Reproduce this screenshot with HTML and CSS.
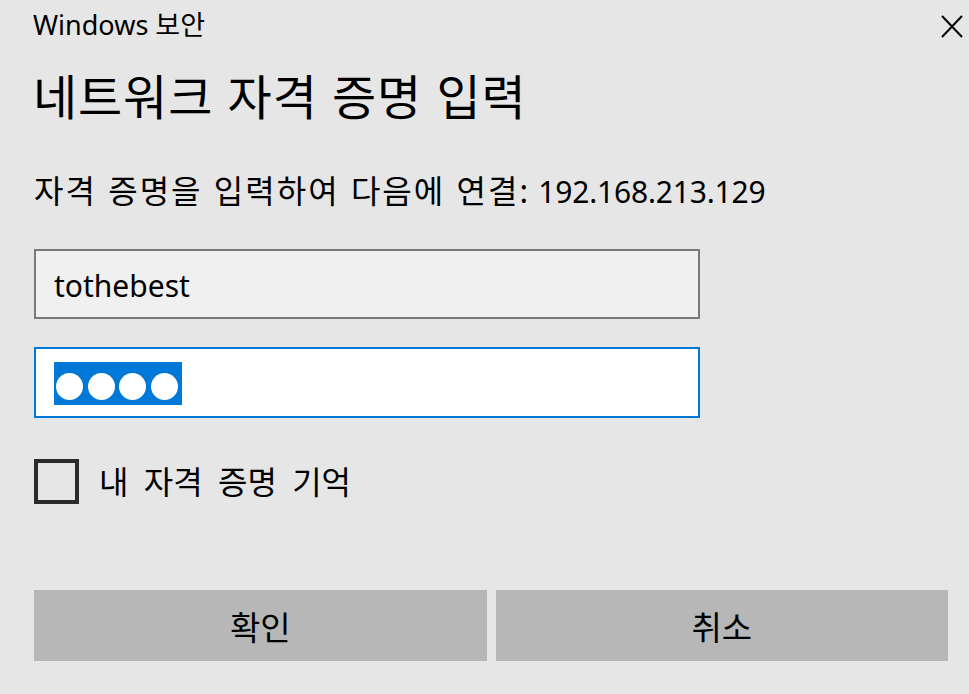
FILE: index.html
```html
<!DOCTYPE html>
<html lang="ko">
<head>
<meta charset="utf-8">
<title>Windows 보안</title>
<link rel="stylesheet" href="styles.css">
</head>
<body>
<div class="dialog">
  <div class="titlebar">
    <span class="app-name">Windows 보안</span>
    <button class="close" aria-label="닫기">
      <svg width="22" height="23" viewBox="0 0 22 23"><path d="M1 1 L21 22 M21 1 L1 22" stroke="#000" stroke-width="2" fill="none"/></svg>
    </button>
  </div>
  <h1 class="heading">네트워크 자격 증명 입력</h1>
  <p class="desc"><span class="desc-ko">자격 증명을 입력하여 다음에 연결:</span> <span class="ip">192.168.213.129</span></p>
  <div class="field field-user"><span class="value">tothebest</span></div>
  <div class="field field-pass">
    <span class="selection"><span class="dot"></span><span class="dot"></span><span class="dot"></span><span class="dot"></span></span>
  </div>
  <label class="remember"><span class="checkbox"></span><span class="remember-text">내 자격 증명 기억</span></label>
  <div class="actions">
    <button class="btn">확인</button>
    <button class="btn">취소</button>
  </div>
</div>
</body>
</html>
```
FILE: styles.css
```css
html, body {
  margin: 0;
  padding: 0;
  background: #e6e6e6;
}
body {
  width: 969px;
  height: 694px;
  overflow: hidden;
  font-family: "Noto Sans", "Noto Sans CJK KR", sans-serif;
  color: #000;
}
.dialog {
  display: flex;
  flex-direction: column;
  padding-left: 34px;
  padding-right: 21px;
}
.titlebar {
  height: 52px;
  display: flex;
  align-items: center;
  justify-content: space-between;
  margin-left: -1px;
  margin-right: -15px;
}
.app-name {
  font-size: 27px;
  line-height: 32px;
  margin-top: -2px;
}
.close {
  border: 0;
  background: transparent;
  padding: 0;
  width: 22px;
  height: 23px;
  display: flex;
}
.heading {
  margin: 15px 0 0 -1px;
  height: 54px;
  font-weight: normal;
  font-size: 48px;
  line-height: 54px;
  letter-spacing: 0.9px;
  font-family: "Noto Sans CJK KR", sans-serif;
}
.desc {
  margin: 50px 0 0 0;
  font-size: 32px;
  line-height: 40px;
  height: 40px;
  white-space: nowrap;
}
.desc-ko {
  letter-spacing: 2px;
  word-spacing: 1px;
}
.ip {
  font-size: 30px;
  letter-spacing: -0.2px;
}
.field {
  box-sizing: border-box;
  width: 666px;
  display: flex;
  align-items: center;
}
.field-user {
  margin-top: 38px;
  height: 70px;
  background: #f0f0f0;
  border: 2px solid #7a7a7a;
  padding-left: 18px;
}
.value {
  font-size: 30px;
  line-height: 40px;
  margin-top: 4px;
}
.field-pass {
  margin-top: 28px;
  height: 71px;
  background: #fff;
  border: 2px solid #0078d7;
  padding-left: 18px;
}
.selection {
  display: flex;
  gap: 4.5px;
  height: 43px;
  box-sizing: border-box;
  padding: 11px 4px 0 2px;
  margin-top: 2px;
  background: #0078d7;
}
.dot {
  width: 27px;
  height: 27px;
  border-radius: 50%;
  background: #fff;
}
.remember {
  margin-top: 41px;
  display: flex;
  align-items: center;
  gap: 20px;
  height: 45px;
}
.checkbox {
  box-sizing: border-box;
  width: 45px;
  height: 45px;
  border: 4px solid #2b2b2b;
  background: #e6e6e6;
}
.remember-text {
  font-size: 32px;
  line-height: 40px;
  word-spacing: 7px;
}
.actions {
  margin-top: 86px;
  display: flex;
  gap: 9px;
}
.btn {
  flex: 1;
  height: 71px;
  border: 0;
  background: #b7b7b7;
  font-family: "Noto Sans CJK KR", sans-serif;
  font-size: 33px;
  color: #000;
  padding: 0;
}
```
